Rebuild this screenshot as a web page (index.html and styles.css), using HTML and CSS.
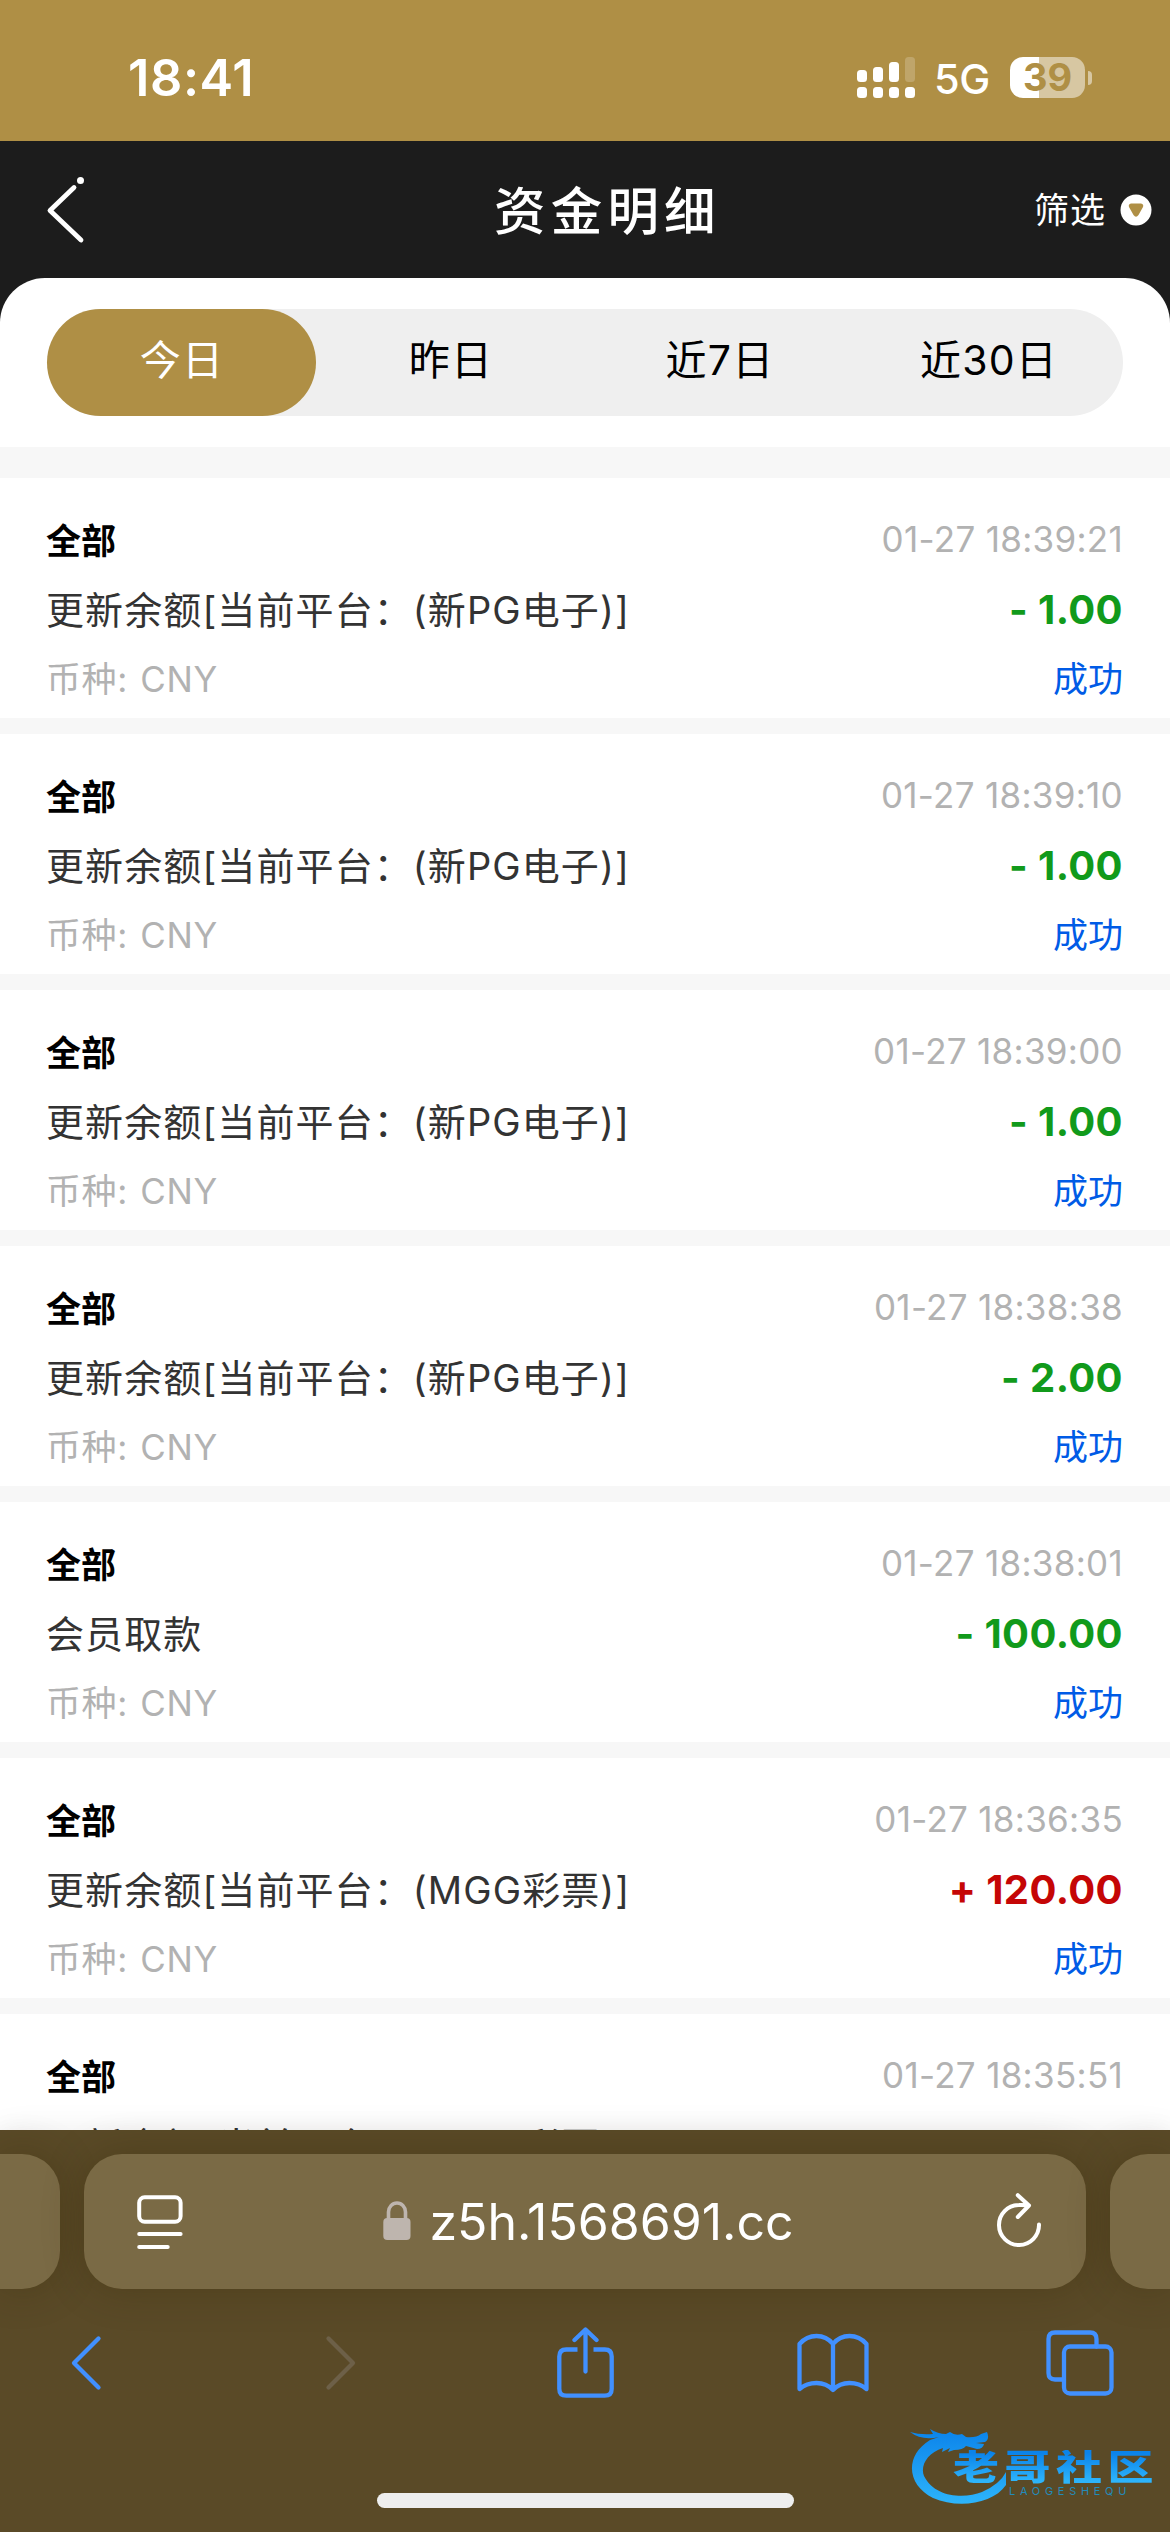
FILE: index.html
```
<!DOCTYPE html>
<html lang="zh-CN">
<head>
<meta charset="utf-8">
<title>资金明细</title>
<link rel="stylesheet" href="styles.css">
</head>
<body>
<div class="screen">
  <div class="status">
    <span class="clock">18:41</span>
    <svg class="signal" width="60" height="42" viewBox="0 0 60 42" fill="#fff">
      <rect x="1" y="13" width="10" height="12" rx="3.5"/><rect x="17" y="10" width="10" height="15" rx="3.5"/><rect x="33" y="5" width="10" height="20" rx="3.5"/><rect x="49" y="0" width="10" height="25" rx="3.5" opacity=".2"/>
      <rect x="1" y="30" width="10" height="11" rx="3.5"/><rect x="17" y="30" width="10" height="11" rx="3.5"/><rect x="33" y="30" width="10" height="11" rx="3.5"/><rect x="49" y="30" width="10" height="11" rx="3.5"/>
    </svg>
    <span class="network">5G</span>
    <span class="battery">39</span>
    <span class="nub"></span>
  </div>
  <header class="header">
    <svg class="back" width="44" height="70" viewBox="0 0 44 70" fill="none" stroke="#fff" stroke-width="4.8" stroke-linecap="round" stroke-linejoin="round"><path d="M30 12.500L6 35.500L37 65"/><circle cx="36.500" cy="5.500" r="3.500" fill="#fff" stroke="none"/></svg>
    <h1 class="title">资金明细</h1>
    <div class="filter"><span>筛选</span>
      <svg width="32" height="32" viewBox="0 0 32 32"><circle cx="16" cy="16" r="15.500" fill="#fff"/><path d="M11 9.500h10q3 .500 2 3.500l-4.500 8q-2.500 3.500-5 0L9 13q-1-3 2-3.500z" fill="#af8f45"/></svg>
    </div>
  </header>
  <main class="sheet">
    <nav class="tabs"><span class="tab active">今日</span><span class="tab">昨日</span><span class="tab">近7日</span><span class="tab">近30日</span></nav>
    <div class="list">
      <article class="item"><b class="kind">全部</b><time class="date">01-27 18:39:21</time><span class="desc">更新余额[当前平台：(新PG电子)]</span><span class="amount">- 1.00</span><span class="currency">币种: <i>CNY</i></span><span class="state">成功</span></article>
      <article class="item"><b class="kind">全部</b><time class="date">01-27 18:39:10</time><span class="desc">更新余额[当前平台：(新PG电子)]</span><span class="amount">- 1.00</span><span class="currency">币种: <i>CNY</i></span><span class="state">成功</span></article>
      <article class="item"><b class="kind">全部</b><time class="date">01-27 18:39:00</time><span class="desc">更新余额[当前平台：(新PG电子)]</span><span class="amount">- 1.00</span><span class="currency">币种: <i>CNY</i></span><span class="state">成功</span></article>
      <article class="item"><b class="kind">全部</b><time class="date">01-27 18:38:38</time><span class="desc">更新余额[当前平台：(新PG电子)]</span><span class="amount">- 2.00</span><span class="currency">币种: <i>CNY</i></span><span class="state">成功</span></article>
      <article class="item"><b class="kind">全部</b><time class="date">01-27 18:38:01</time><span class="desc">会员取款</span><span class="amount">- 100.00</span><span class="currency">币种: <i>CNY</i></span><span class="state">成功</span></article>
      <article class="item"><b class="kind">全部</b><time class="date">01-27 18:36:35</time><span class="desc">更新余额[当前平台：(MGG彩票)]</span><span class="amount plus">+ 120.00</span><span class="currency">币种: <i>CNY</i></span><span class="state">成功</span></article>
      <article class="item"><b class="kind">全部</b><time class="date">01-27 18:35:51</time><span class="desc">更新余额[当前平台：(MGG彩票)]</span></article>
    </div>
  </main>
  <footer class="browser">
    <div class="address-row">
      <div class="peek left"></div>
      <div class="address">
        <svg class="reader" width="46" height="54" viewBox="0 0 46 54" fill="none" stroke="#fff" stroke-width="4" stroke-linecap="round"><rect x="2.200" y="2.200" width="41.400" height="24.500" rx="5.500"/><path d="M2.200 39h41.400M2.200 52h28.500"/></svg>
        <div class="url">
          <svg width="28" height="40" viewBox="0 0 28 40"><path d="M5.500 19v-8a8.500 9 0 0 1 17 0v8" fill="none" stroke="#beb5ae" stroke-width="3.600"/><rect x=".3" y="17" width="27.200" height="22" rx="4" fill="#beb5ae"/></svg>
          <span>z5h.1568691.cc</span>
        </div>
        <svg class="reload" width="46" height="54" viewBox="0 0 46 54" fill="none" stroke="#fff" stroke-width="4" stroke-linecap="round" stroke-linejoin="round"><path d="M42 31.500A20 20 0 1 1 22 12q5-.300 10 .500M20.800 2.200L32 12.500L20.800 24"/></svg>
      </div>
      <div class="peek right"></div>
    </div>
    <div class="tools">
      <svg width="32" height="56" viewBox="0 0 32 56" class="tool"><path d="M28.500 3.500L4 28l24.500 24.500"/></svg>
      <svg width="32" height="56" viewBox="0 0 32 56" class="tool disabled"><path d="M3.500 3.500L28 28L3.500 52.500"/></svg>
      <svg width="57" height="72" viewBox="0 0 57 72" class="tool"><path d="M20.500 22.500H9.300q-7 0-7 7v32.200q0 7 7 7h38.400q7 0 7-7V29.500q0-7-7-7H36.500" stroke-linecap="butt"/><path d="M28.500 44.500V3M17.500 13L28.500 2.500L39.500 13"/></svg>
      <svg width="72" height="60" viewBox="0 0 72 60" class="tool"><path d="M36 11q-6.500-8-16.500-8T2.500 11v45q7-6 17-6T36 57q6.500-7 16.500-7t17 6V11q-7-8-17-8T36 11v46"/></svg>
      <svg width="68" height="66" viewBox="0 0 68 66" class="tool"><rect x="18" y="16.500" width="47.500" height="47" rx="6"/><path d="M18 49.500H9q-6.500 0-6.500-6.500V9q0-6.500 6.500-6.500h35q6.500 0 6.500 6.500v7.500"/></svg>
    </div>
    <div class="home"></div>
    <div class="mark">
      <svg width="100" height="80" viewBox="0 0 100 80"><defs><linearGradient id="g" x1="0" y1="0" x2="0" y2="1"><stop offset="0" stop-color="#0b83ea"/><stop offset="1" stop-color="#2db4fb"/></linearGradient></defs>
      <path d="M0 7q10 3 23 2l-3-5q8 5 16 5l4-2q5 4 12 2l4 3q10 1 15-3l6-2q3 7-2 10l-9 1 8 1q-1 5-7 5l-11-3q-3 4-12 4l-6 2 2-4-8 4 1-4C17 28 10 41 14 51C25 73 55 74 72 67q18-8 24-20v13C83 79 48 84 23 73C-3 60-6 31 20 15l9-3Q12 16 0 7z" fill="url(#g)"/></svg>
      <strong>老哥社区</strong><small>LAOGESHEQU</small>
    </div>
  </footer>
</div>
</body>
</html>
```
FILE: styles.css
```
* { box-sizing: border-box; }
body { margin: 0; font-family: Inter, "Noto Sans CJK SC", sans-serif; }
.screen { width: 1170px; height: 2532px; display: flex; flex-direction: column; overflow: hidden; background: #1c1c1c; }
svg { display: block; flex: none; }
.status { height: 141px; flex: none; background: #af8f45; color: #fff; display: flex; align-items: center; padding: 14px 78px 0 128px; }
.clock { font-size: 50.5px; font-weight: 600; letter-spacing: 0.6px; margin-right: auto; }
.network { font-size: 41.5px; font-weight: 450; letter-spacing: -0.5px; width: 54px; margin: 2px 22px 0 18px; white-space: nowrap; }
.battery { width: 75px; height: 41px; border-radius: 13px; background: linear-gradient(90deg, #fff 29px, #d7c7a2 29px); color: #af8f45; font-size: 38px; font-weight: 700; line-height: 41px; text-align: center; }
.nub { width: 4px; height: 14px; margin-left: 3px; border-radius: 0 4px 4px 0; background: #d7c7a2; }
.header { height: 137px; flex: none; display: flex; align-items: center; color: #fff; padding: 0 18px 0 44px; }
.title { margin: 2px 0 0 406px; font-size: 51.5px; font-weight: 500; letter-spacing: 5.2px; line-height: 70px; }
.filter { display: flex; align-items: center; gap: 14px; margin-left: auto; font-size: 35px; letter-spacing: 1px; }
.filter span { padding-bottom: 4px; }
.sheet { flex: 1; min-height: 0; display: flex; flex-direction: column; background: #fff; border-radius: 45px 45px 0 0; overflow: hidden; }
.tabs { margin: 31px 47px; height: 107px; flex: none; display: grid; grid-template-columns: repeat(4, 1fr); background: #efefef; border-radius: 54px; }
.tab { display: flex; align-items: center; justify-content: center; padding: 0 0 11px 1px; font-size: 41px; letter-spacing: 1.2px; color: #000; border-radius: 54px; }
.active { background: #af8f45; color: #fff; }
.list { background: #f7f7f7; padding-top: 31px; display: flex; flex-direction: column; gap: 16px; }
.item { height: 240px; flex: none; background: #fff; padding: 27px 47px 0 46px; display: grid; grid-template-columns: auto auto; grid-template-rows: 67px 70px 68px; align-items: center; justify-content: space-between; }
.date, .amount, .state { text-align: right; }
.kind { font-size: 35px; font-weight: 700; color: #000; }
.date { font-size: 35px; letter-spacing: .3px; color: #b2b2b2; }
.desc { font-size: 38px; letter-spacing: 1.1px; color: #333; white-space: nowrap; }
.amount { font-size: 40px; letter-spacing: .4px; font-weight: 700; color: #119a1b; padding-top: 5px; }
.plus { color: #c50606; }
.currency { font-size: 35px; letter-spacing: .6px; color: #b2b2b2; }
.currency i { font-style: normal; margin-left: 2px; }
.state { font-size: 35px; color: #005be6; }
.browser { height: 402px; flex: none; position: relative; background: #5a4a27; box-shadow: 0 0 30px rgba(0, 0, 0, .07); display: flex; flex-direction: column; padding-top: 24px; }
.address-row { display: grid; grid-template-columns: 60px 1002px 60px; gap: 24px; height: 135px; flex: none; }
.address, .peek { background: #7a6a45; box-shadow: 0 0 40px rgba(50, 35, 5, .3); }
.address { border-radius: 38px; display: flex; align-items: center; justify-content: space-between; padding: 0 43px 0 53px; }
.reload { margin-top: -4px; }
.left { border-radius: 0 38px 38px 0; }
.right { border-radius: 38px 0 0 38px; }
.url { display: flex; align-items: center; gap: 18px; color: #fff; font-size: 50px; margin-left: -3px; }
.url svg { margin-top: -2px; }
.tools { height: 72px; flex: none; margin-top: 38px; display: grid; grid-template-columns: 172px 338px 150px 345px 150px; align-items: center; justify-items: center; }
.tool { fill: none; stroke: #4190ff; stroke-width: 4.3; stroke-linecap: round; stroke-linejoin: round; }
.disabled { stroke: #6d6048; }
.home { width: 417px; height: 15px; border-radius: 8px; background: #eee; margin: 94px auto 0; }
.mark { position: absolute; left: 910px; top: 295px; width: 250px; height: 90px; }
.mark strong { position: absolute; left: 43px; top: 19px; font-size: 46px; line-height: 46px; font-weight: 900; letter-spacing: 5.5px; white-space: nowrap; background: linear-gradient(#0b83ea 10%, #2db4fb 90%); color: transparent; background-clip: text; transform: scaleY(.76); }
.mark small { position: absolute; left: 99px; top: 60px; font-size: 11px; line-height: 12px; letter-spacing: 4.7px; color: #238bbb; }
```
